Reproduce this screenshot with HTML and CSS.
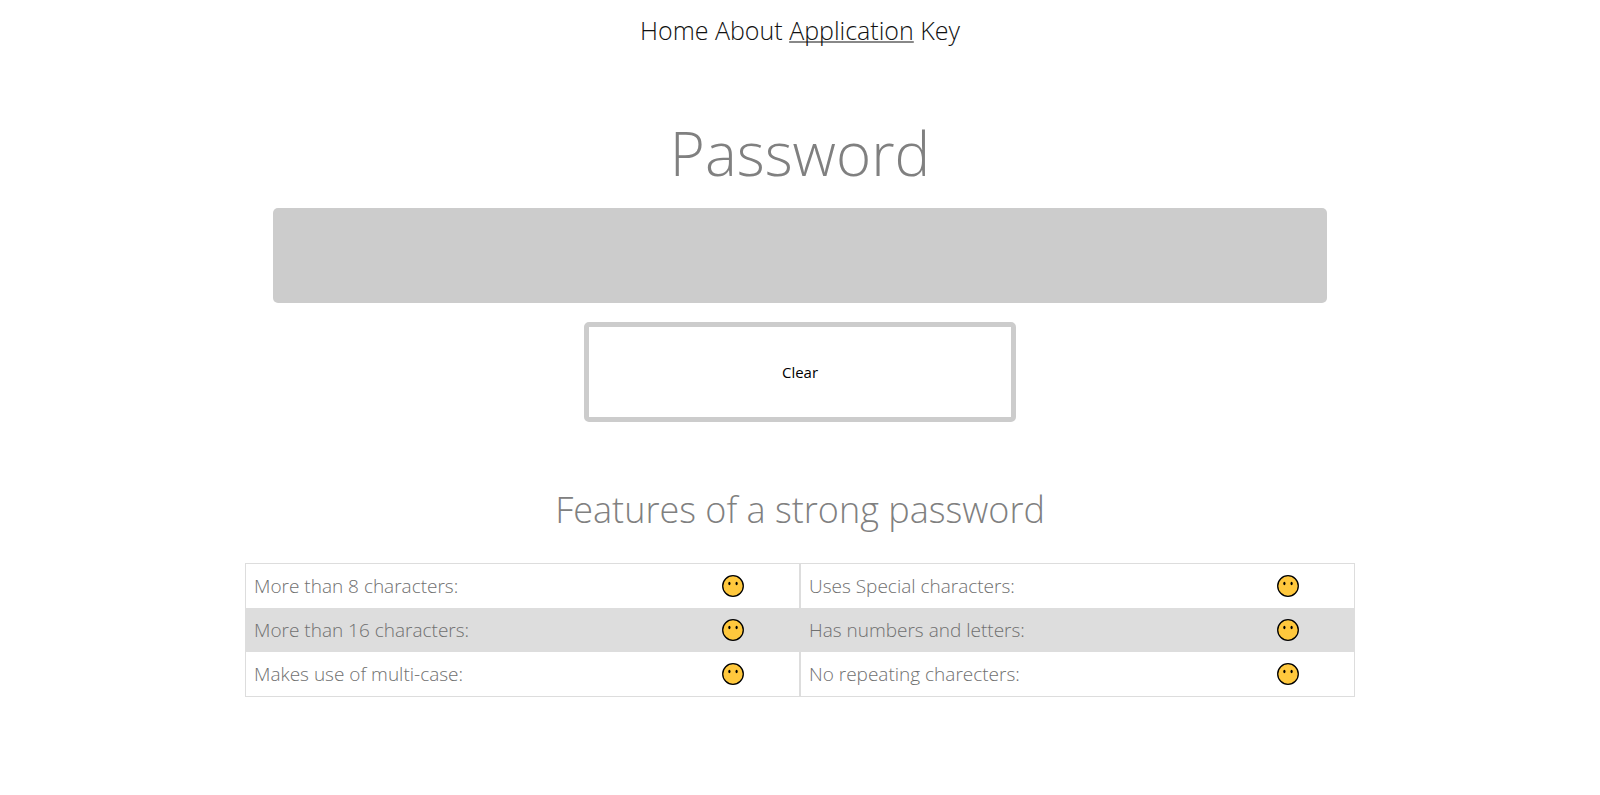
FILE: index.html
```html
<!DOCTYPE html>
<html lang="en">
<head>
<meta charset="utf-8">
<title>Password</title>
<link rel="stylesheet" href="styles.css">
</head>
<body>
<svg class="sprite" aria-hidden="true">
  <symbol id="face" viewBox="0 0 22 22">
    <circle cx="11" cy="11" r="10.3" fill="#ffc83d" stroke="#000" stroke-width="1.3"/>
    <ellipse cx="7.4" cy="8.5" rx="1.1" ry="1.8" fill="#000"/>
    <ellipse cx="14.6" cy="8.5" rx="1.1" ry="1.8" fill="#000"/>
  </symbol>
</svg>
<nav class="nav">
  <a href="#home">Home</a>
  <a href="#about">About</a>
  <a class="current" href="#application">Application</a>
  <a href="#key">Key</a>
</nav>
<main class="container">
  <form class="form">
    <h1 class="title"><label for="password">Password</label></h1>
    <input class="password" id="password" type="text" autocomplete="off">
    <button class="clear" type="reset">Clear</button>
  </form>
  <h2 class="subtitle">Features of a strong password</h2>
  <div class="features">
    <table class="table">
      <tr><td class="rule">More than 8 characters:</td><td class="state"><svg class="face" role="img" aria-label="Not checked"><use href="#face"/></svg></td></tr>
      <tr><td class="rule">More than 16 characters:</td><td class="state"><svg class="face" role="img" aria-label="Not checked"><use href="#face"/></svg></td></tr>
      <tr><td class="rule">Makes use of multi-case:</td><td class="state"><svg class="face" role="img" aria-label="Not checked"><use href="#face"/></svg></td></tr>
    </table>
    <table class="table">
      <tr><td class="rule">Uses Special characters:</td><td class="state"><svg class="face" role="img" aria-label="Not checked"><use href="#face"/></svg></td></tr>
      <tr><td class="rule">Has numbers and letters:</td><td class="state"><svg class="face" role="img" aria-label="Not checked"><use href="#face"/></svg></td></tr>
      <tr><td class="rule">No repeating charecters:</td><td class="state"><svg class="face" role="img" aria-label="Not checked"><use href="#face"/></svg></td></tr>
    </table>
  </div>
</main>
</body>
</html>
```

FILE: styles.css
```css
* { box-sizing: border-box; }

body {
  margin: 0;
  background: #fff;
  color: #808080;
  font-family: "Open Sans", sans-serif;
  font-weight: 300;
}

.sprite { display: none; }

.nav {
  padding-top: 12px;
  font-size: 25px;
  line-height: 36px;
  text-align: center;
}

.nav a {
  color: #111;
  text-decoration: none;
}

.nav .current {
  text-decoration: underline 2px #888;
  text-decoration-skip-ink: none;
  text-underline-offset: 1px;
}

.container {
  max-width: 1110px;
  margin: 0 auto;
  padding-top: 58px;
}

.form {
  display: flex;
  flex-direction: column;
  align-items: center;
}

.title {
  margin: 0 0 8px;
  font-size: 60px;
  font-weight: 300;
  line-height: 94px;
}

.password {
  width: 95%;
  height: 95px;
  margin-bottom: 19px;
  padding: 0 20px;
  border: 0;
  border-radius: 5px;
  background: #ccc;
  color: #000;
  font: inherit;
  font-size: 40px;
  text-align: center;
}

.clear {
  width: 432px;
  max-width: 95%;
  height: 100px;
  border: 5px solid #ccc;
  border-radius: 5px;
  background: #fff;
  color: #000;
  font-family: inherit;
  font-size: 15px;
  font-weight: 500;
}

.subtitle {
  margin: 56px 0 21px;
  font-size: 36px;
  font-weight: 300;
  line-height: 64px;
  text-align: center;
}

.features {
  display: grid;
  grid-template-columns: 1fr 1fr;
}

.table {
  width: 100%;
  border: 1px solid #ddd;
  border-spacing: 0;
  table-layout: fixed;
  color: #707070;
  font-size: 19px;
  line-height: 28px;
}

.table td { padding: 8px; }

.table tr:nth-child(even) { background: #ddd; }

.rule { width: 76%; }

.state { text-align: center; }

.face {
  display: block;
  width: 22px;
  height: 22px;
  margin: 0 auto;
}
```
